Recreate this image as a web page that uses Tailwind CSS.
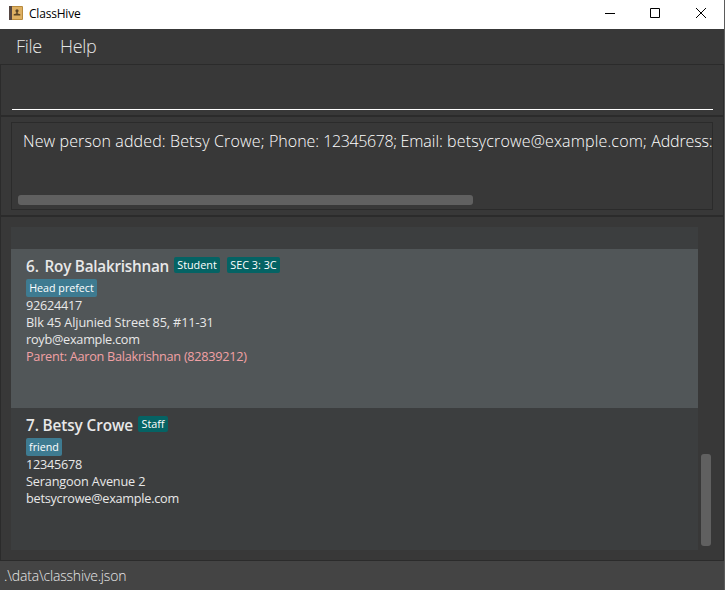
<!DOCTYPE html>
<html lang="en"><head><meta charset="utf-8"><title>ClassHive</title>
<script src="https://cdn.jsdelivr.net/npm/@tailwindcss/browser@4"></script></head>
<body class="w-[725px] h-[590px] overflow-hidden bg-[#383838] font-['Open_Sans','Noto_Sans',sans-serif]">
<div class="flex h-[590px] w-[725px] flex-col border-r border-[#5b5b5b]">
  <header class="flex h-[29px] shrink-0 items-center bg-white text-black">
    <svg class="ml-[9px] -mt-[3px] shrink-0" width="14" height="14" viewBox="0 0 14 14"><rect width="14" height="14" rx="1" fill="#b88a3c"/><rect x="3" y="1" width="10" height="12" fill="#deb062"/><rect width="3" height="14" fill="#554642"/><circle cx="8" cy="4.800" r="1.600" fill="#5a4426"/><path d="M7.300 5h1.400v2.500l2.600.8V9.500H4.700V8.300l2.600-.8z" fill="#5a4426"/></svg>
    <span class="ml-[6px] -mt-[2px] w-[520px] whitespace-nowrap text-[12px] tracking-[-0.2px]">ClassHive</span>
    <svg class="ml-auto mr-[17px] -mt-[3px] shrink-0" width="103" height="12" viewBox="0 0 103 12" fill="none" stroke="#000"><path d="M1 6.500h10M46.500 1.500h9v9h-9zM92 1l10 10M102 1L92 11"/></svg>
  </header>
  <nav class="flex h-[35px] shrink-0 items-center pl-4 text-[18px] font-light tracking-[-0.3px] text-[#e6e6e6]"><span class="w-[44px]">File</span><span>Help</span></nav>
  <section class="h-[52px] shrink-0 border border-b-0 border-[#2b2b2b] px-[11px] pt-[44px]"><div class="h-px w-[701px] bg-white"></div></section>
  <section class="-mt-px h-[100px] shrink-0 border-x border-t-2 border-[#2b2b2b] px-[10px] pt-[5px]">
    <div class="flex h-[88px] w-[702px] flex-col overflow-hidden border border-[#2b2b2b] pl-[11px]">
      <p class="mt-[6px] h-[24px] text-[16px] leading-[24px] font-light whitespace-pre text-white"><span class="tracking-[0.12px]">New person added: </span><span class="tracking-[0.15px]">Betsy Crowe; </span><span>Phone: </span><span class="tracking-[-0.4px]">12345678; </span><span>Email: </span><span class="tracking-[0.16px]">betsycrowe@example.com; </span><span class="tracking-[-0.15px]">Address:</span></p>
      <div class="-ml-[5px] mt-[42px] h-[10px] w-[455px] rounded-[3px] bg-[#606060]"></div>
    </div>
  </section>
  <main class="flex h-[346px] shrink-0 border-x border-y border-t-2 border-[#2b2b2b] px-[10px] pt-[10px]">
    <div class="h-[323px] w-[687px] shrink-0 bg-[#3c3e3f] text-[12.7px] text-[#e8e8e8]">
      <div class="h-[22px]"></div>
      <article class="h-[159px] bg-[#515658] pl-[15px] pt-[7px]">
        <div class="flex h-[22px] items-start"><h2 class="-mt-px flex w-[143px] text-[15.300px] leading-[22px] font-semibold whitespace-nowrap"><span class="w-[19px]">6.</span><span class="tracking-[-0.25px]">Roy Balakrishnan</span></h2><span class="ml-[5px] mt-px h-[16px] w-[46px] rounded-[2px] bg-[#056364] text-center text-[10.8px] leading-[16px] text-white">Student</span><span class="ml-[7px] mt-px h-[16px] w-[53px] rounded-[2px] bg-[#056364] text-center text-[10.8px] leading-[16px] whitespace-nowrap text-white">SEC 3: 3C</span></div>
        <div class="mt-px h-[18px] w-[71px] rounded-[2px] bg-[#3e7b91] text-center text-[10.7px] leading-[18px] whitespace-nowrap text-white">Head prefect</div>
        <div class="leading-[17px]"><p class="tracking-[-0.25px]">92624417</p><p class="tracking-[-0.12px]">Blk 45 Aljunied Street 85, #11-31</p><p class="tracking-[-0.25px]">royb@example.com</p><p class="tracking-[-0.27px] text-[#f1a1a5]">Parent: Aaron Balakrishnan (82839212)</p></div>
      </article>
      <article class="pl-[15px] pt-[7px]">
        <div class="flex h-[22px] items-start"><h2 class="-mt-px flex w-[107px] text-[15.300px] leading-[22px] font-semibold whitespace-nowrap"><span class="w-[18px]">7.</span><span class="tracking-[-0.1px]">Betsy Crowe</span></h2><span class="ml-[5px] mt-px h-[16px] w-[30px] rounded-[2px] bg-[#056364] text-center text-[10.8px] leading-[16px] text-white">Staff</span></div>
        <div class="mt-px h-[18px] w-[36px] rounded-[2px] bg-[#3e7b91] text-center text-[10.7px] leading-[18px] text-white">friend</div>
        <div class="leading-[17px]"><p class="tracking-[-0.25px]">12345678</p><p class="tracking-[-0.15px]">Serangoon Avenue 2</p><p class="tracking-[-0.25px]">betsycrowe@example.com</p></div>
      </article>
    </div>
    <div class="ml-[3px] mt-[227px] h-[92px] w-[10px] shrink-0 rounded-[3px] bg-[#606060]"></div>
  </main>
  <footer class="flex flex-1 items-center bg-[#444444] pl-1 text-[14px] font-light tracking-[-0.18px] text-[#e8e8e8]">.\data\classhive.json</footer>
</div>
</body></html>
